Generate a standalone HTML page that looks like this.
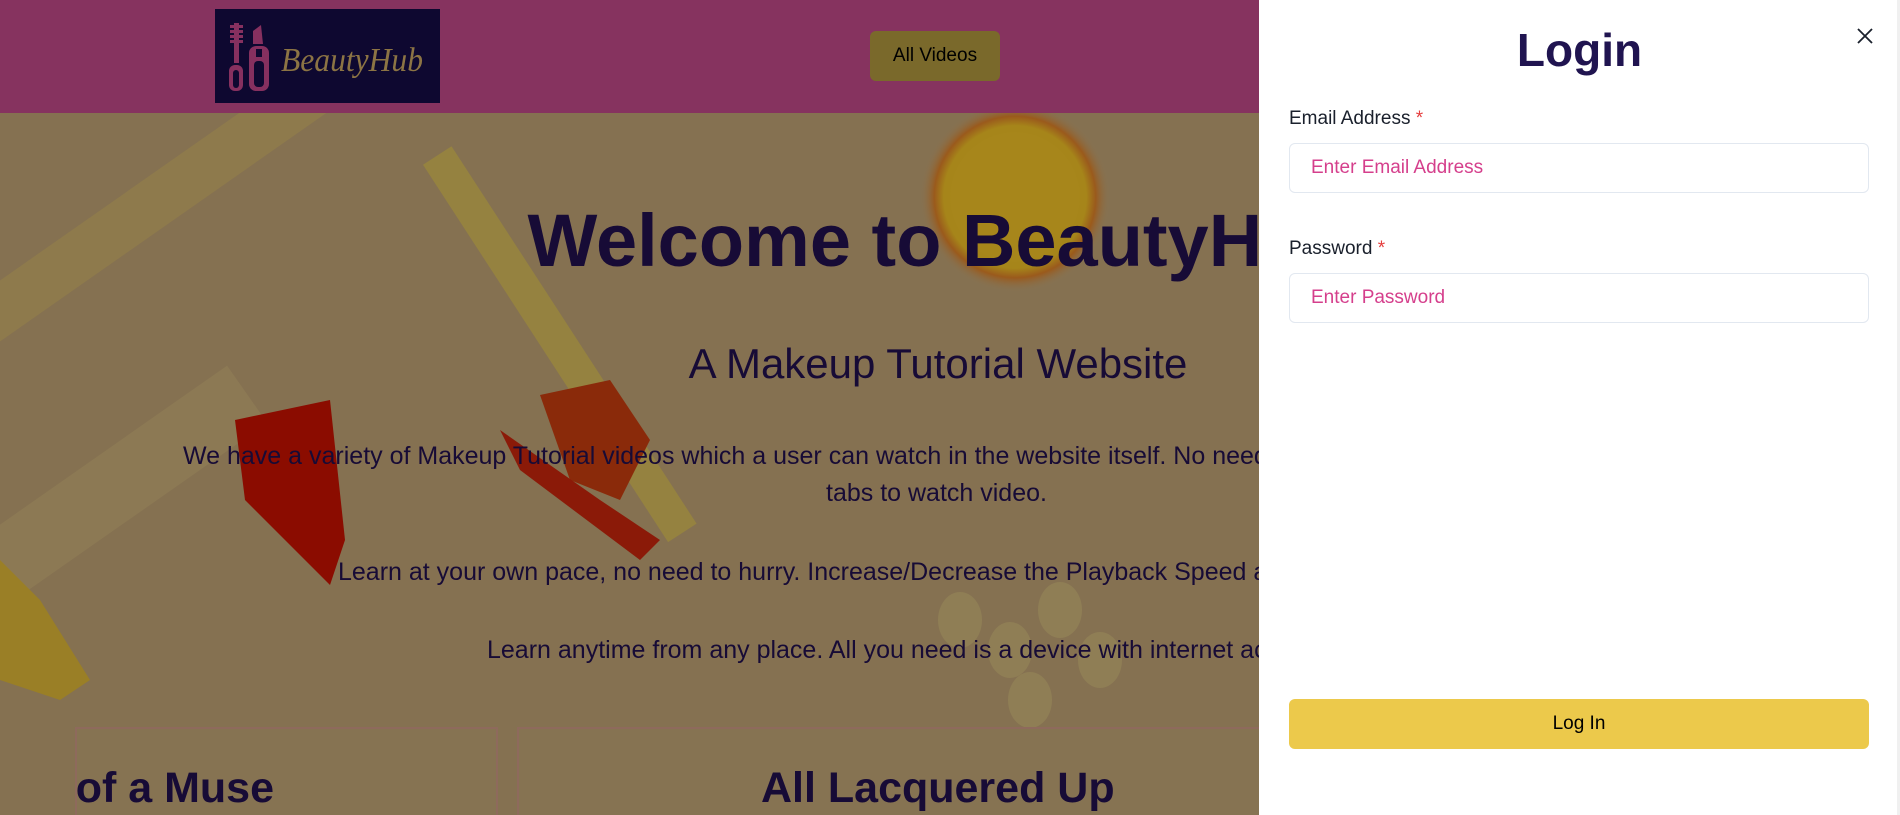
<!DOCTYPE html>
<html><head><meta charset="utf-8">
<style>
*{margin:0;padding:0;box-sizing:border-box}
html,body{width:1900px;height:815px;overflow:hidden}
body{position:relative;background:#857151;font-family:"Liberation Sans",sans-serif}
.bg{position:absolute;left:0;top:0;width:1260px;height:815px;overflow:hidden}
.hdr{position:absolute;left:0;top:0;width:1260px;height:113px;background:#86335f}
.logo{position:absolute;left:215px;top:9px;width:225px;height:94px;background:#0e0830}
.btn{position:absolute;left:870px;top:31px;width:130px;height:50px;background:#7a692b;border-radius:6px;font-size:19px;color:#000;text-align:center;line-height:50px}
.t{position:absolute;white-space:nowrap;color:#170b36}
.drawer{position:absolute;left:1259px;top:0;width:641px;height:815px;background:#fff}
.lbl{position:absolute;left:30px;font-size:19px;color:#1a202c;line-height:24px}
.lbl span{color:#e53e3e}
.inp{position:absolute;left:30px;width:580px;height:50px;border:1px solid #e2e8f0;border-radius:6px;font-size:19px;color:#d53f8c;line-height:48px;padding-left:21px}
.card{position:absolute;top:727px;height:100px;background:#867352;border:2px solid #8e6a5c;overflow:hidden}
</style></head><body>
<div class="bg">
<svg width="1260" height="815" style="position:absolute;left:0;top:0">
<defs><radialGradient id="g1"><stop offset="0" stop-color="#a88818"/><stop offset="0.75" stop-color="#a6851a"/><stop offset="0.85" stop-color="#9a5a1c"/><stop offset="1" stop-color="#8a7350" stop-opacity="0"/></radialGradient></defs>
<rect width="1260" height="815" fill="#857151"/>
<g transform="rotate(-35 300 400)" fill="#8c7954">
<rect x="-300" y="330" width="560" height="70"/>
<rect x="-200" y="130" width="900" height="50" fill="#8e7a4c"/>
</g>
<g transform="rotate(57 560 350)"><rect x="330" y="330" width="450" height="34" fill="#958240"/></g>
<path d="M540 395 L610 380 L650 440 L620 500 L570 480 Z" fill="#8a2a0a"/>
<path d="M500 430 L600 500 L660 540 L640 560 L520 470 Z" fill="#8b1a08"/>
<path d="M235 420 L330 400 L345 540 L330 585 L245 500 Z" fill="#8b0c00"/>
<circle cx="1015" cy="197" r="95" fill="url(#g1)"/>
<circle cx="1015" cy="197" r="65" fill="#a7861b"/>
<g fill="#8f7e55"><ellipse cx="960" cy="620" rx="22" ry="28"/><ellipse cx="1010" cy="650" rx="22" ry="28"/><ellipse cx="1060" cy="610" rx="22" ry="28"/><ellipse cx="1100" cy="660" rx="22" ry="28"/><ellipse cx="1030" cy="700" rx="22" ry="28"/></g>
<path d="M0 560 L40 600 L90 680 L60 700 L0 680 Z" fill="#9a7f26"/>
</svg>
<div class="t" style="left:0;width:1880px;text-align:center;top:204px;font-size:74px;font-weight:bold;line-height:74px">Welcome to BeautyHub</div>
<div class="t" style="left:0;width:1876px;text-align:center;top:343px;font-size:42px;line-height:42px">A Makeup Tutorial Website</div>
<div class="t" style="left:183px;top:442px;font-size:25px;line-height:28px">We have a variety of Makeup Tutorial videos which a user can watch in the website itself. No need to open other</div>
<div class="t" style="left:826px;top:479px;font-size:25px;line-height:28px">tabs to watch video.</div>
<div class="t" style="left:338px;top:558px;font-size:25px;line-height:28px">Learn at your own pace, no need to hurry. Increase/Decrease the Playback Speed as you like.</div>
<div class="t" style="left:487px;top:636px;font-size:25px;line-height:28px">Learn anytime from any place. All you need is a device with internet access.</div>
<div class="card" style="left:75px;width:423px"><div class="t" style="right:222px;top:38px;font-size:43px;font-weight:bold;line-height:43px">Mark of a Muse</div></div>
<div class="card" style="left:517px;width:840px"><div class="t" style="left:242px;top:38px;font-size:43px;font-weight:bold;line-height:43px">All Lacquered Up</div></div>
<div class="hdr"></div>
<div class="logo">
<svg width="225" height="94" style="position:absolute;left:0;top:0">
<g fill="#86305f">
<rect x="19" y="14" width="5" height="40"/>
<rect x="15" y="16" width="13" height="3"/><rect x="15" y="21" width="13" height="3"/><rect x="15" y="26" width="13" height="3"/><rect x="15" y="31" width="13" height="3"/>
<rect x="14" y="56" width="14" height="26" rx="6"/>
<path d="M38 35 L38 22 L46 16 L48 35 Z"/>
<rect x="34" y="37" width="20" height="45" rx="7"/>
</g>
<rect x="18" y="61" width="6" height="18" rx="3" fill="#0e0830"/>
<rect x="39" y="52" width="10" height="26" rx="4" fill="#0e0830"/>
<rect x="41" y="40" width="6" height="8" fill="#0e0830"/>
<text x="66" y="62" font-family="Liberation Serif,serif" font-style="italic" font-size="34" fill="#8c7444" textLength="142" lengthAdjust="spacingAndGlyphs">BeautyHub</text>
</svg>
</div>
<div class="btn">All Videos</div>
</div>
<div class="drawer">
<div style="position:absolute;left:0;width:641px;text-align:center;top:25px;font-size:46px;font-weight:bold;color:#201450;line-height:50px">Login</div>
<svg width="18" height="18" style="position:absolute;left:597px;top:27px"><path d="M2 2 L16 16 M16 2 L2 16" stroke="#1a202c" stroke-width="1.8"/></svg>
<div class="lbl" style="top:107px">Email Address <span>*</span></div>
<div class="inp" style="top:143px">Enter Email Address</div>
<div class="lbl" style="top:237px">Password <span>*</span></div>
<div class="inp" style="top:273px">Enter Password</div>
<div style="position:absolute;left:30px;top:699px;width:580px;height:50px;background:#ecc94b;border-radius:6px;text-align:center;line-height:50px;font-size:19px;color:#000">Log In</div>
<div style="position:absolute;right:0;top:0;width:3px;height:815px;background:#f0f0f0"></div>
</div>
</body></html>
